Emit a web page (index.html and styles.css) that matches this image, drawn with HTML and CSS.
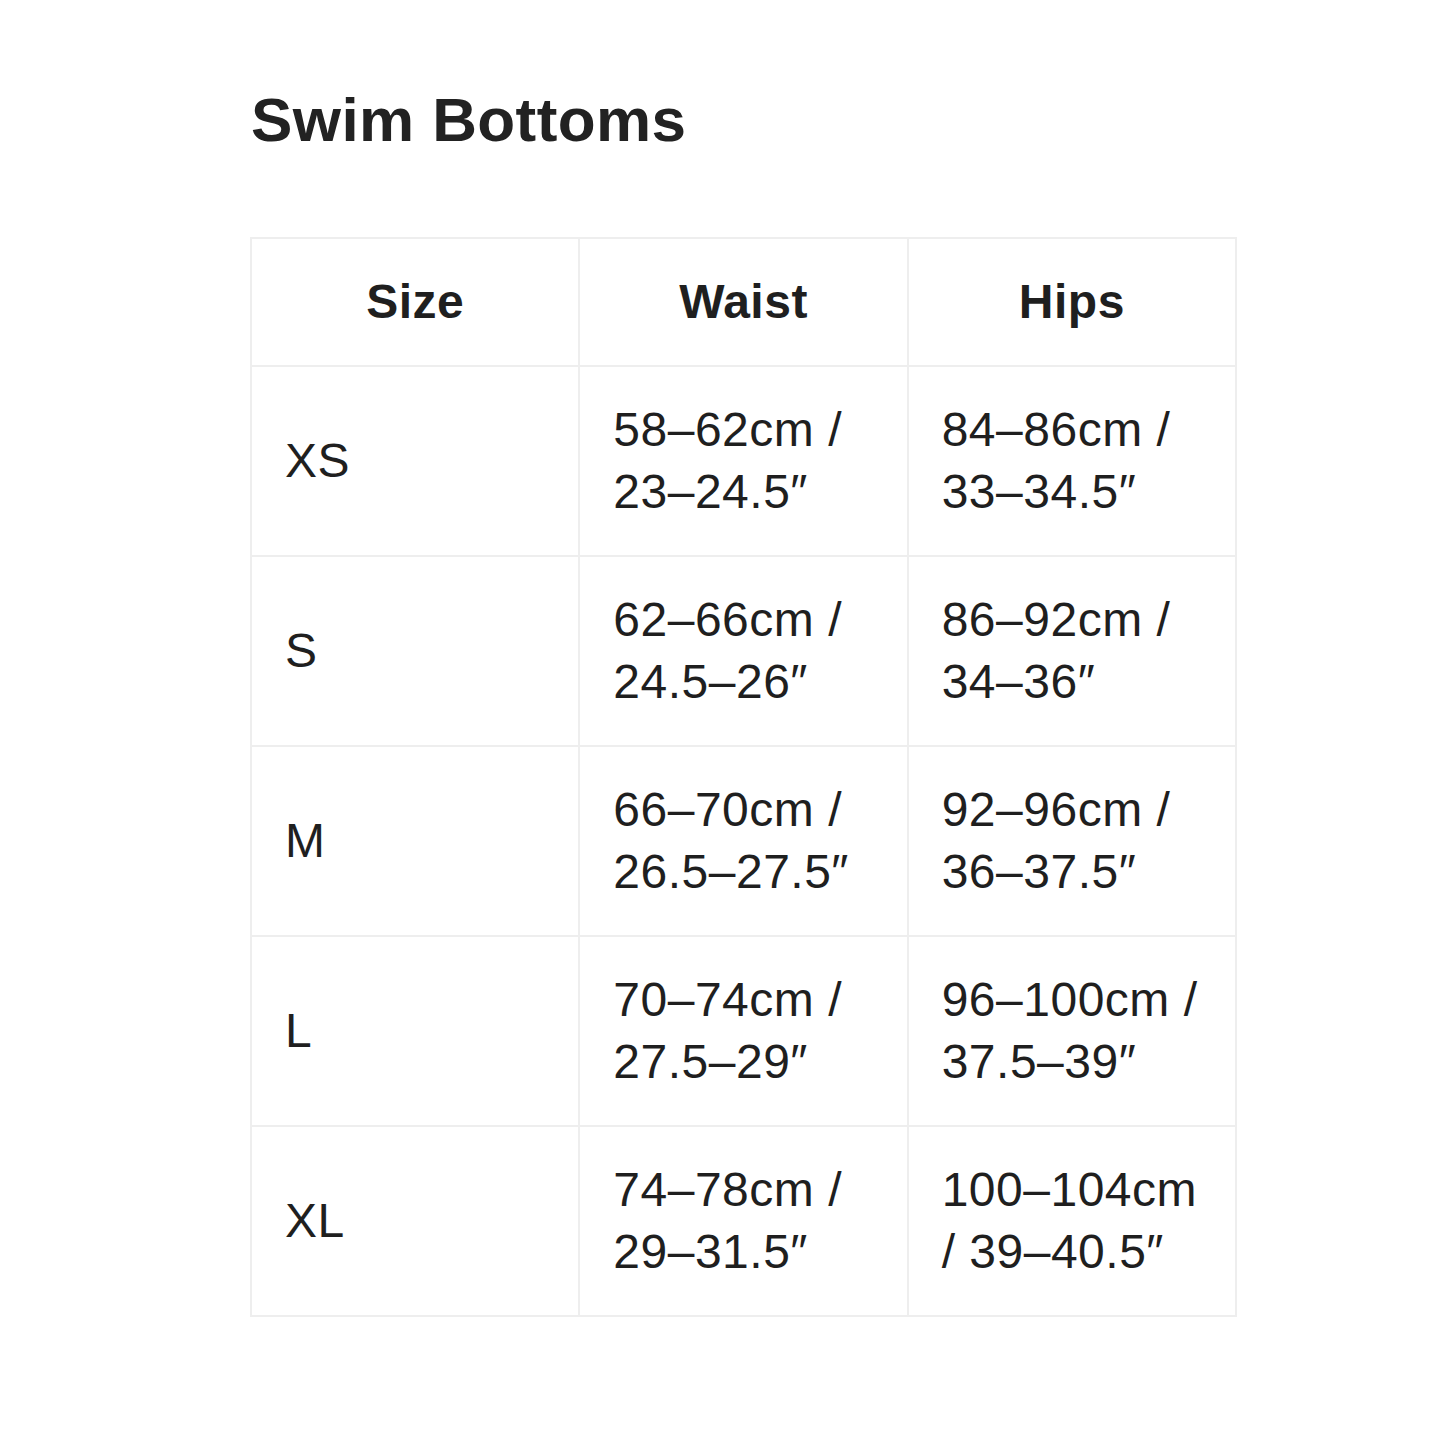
FILE: index.html
```html
<!DOCTYPE html>
<html>
<head>
<meta charset="utf-8">
<link rel="stylesheet" href="styles.css">
</head>
<body>
<main class="page">
  <h1 class="title">Swim Bottoms</h1>
  <table class="chart">
    <colgroup><col class="c"><col class="c"><col class="c"></colgroup>
    <thead>
      <tr><th>Size</th><th>Waist</th><th>Hips</th></tr>
    </thead>
    <tbody>
      <tr><td>XS</td><td>58–62cm / 23–24.5″</td><td>84–86cm / 33–34.5″</td></tr>
      <tr><td>S</td><td>62–66cm / 24.5–26″</td><td>86–92cm / 34–36″</td></tr>
      <tr><td>M</td><td>66–70cm / 26.5–27.5″</td><td>92–96cm / 36–37.5″</td></tr>
      <tr><td>L</td><td>70–74cm / 27.5–29″</td><td>96–100cm / 37.5–39″</td></tr>
      <tr><td>XL</td><td>74–78cm / 29–31.5″</td><td>100–104cm / 39–40.5″</td></tr>
    </tbody>
  </table>
</main>
</body>
</html>
```

FILE: styles.css
```css
html, body {
  margin: 0;
  padding: 0;
  background: #fff;
}
body {
  font-family: "Liberation Sans", Arial, Helvetica, sans-serif;
  color: #1f1f1f;
}
.page {
  padding: 85px 0 0 250px;
}
.title {
  margin: 0 0 84px 1px;
  font-size: 62px;
  font-weight: 700;
  line-height: 69px;
  letter-spacing: 0.4px;
  color: #222;
}
.chart {
  border-collapse: collapse;
  table-layout: fixed;
  width: 987px;
  margin-top: -1px;
}
.chart .c {
  width: 33.333%;
}
.chart th,
.chart td {
  border: 2px solid #eeeeee;
  padding: 32px 33px;
  font-size: 48px;
  line-height: 62px;
  vertical-align: middle;
  letter-spacing: 0.5px;
}
.chart th {
  font-weight: 700;
  text-align: center;
}
.chart td {
  font-weight: 400;
  text-align: left;
  height: 124px;
}
```
